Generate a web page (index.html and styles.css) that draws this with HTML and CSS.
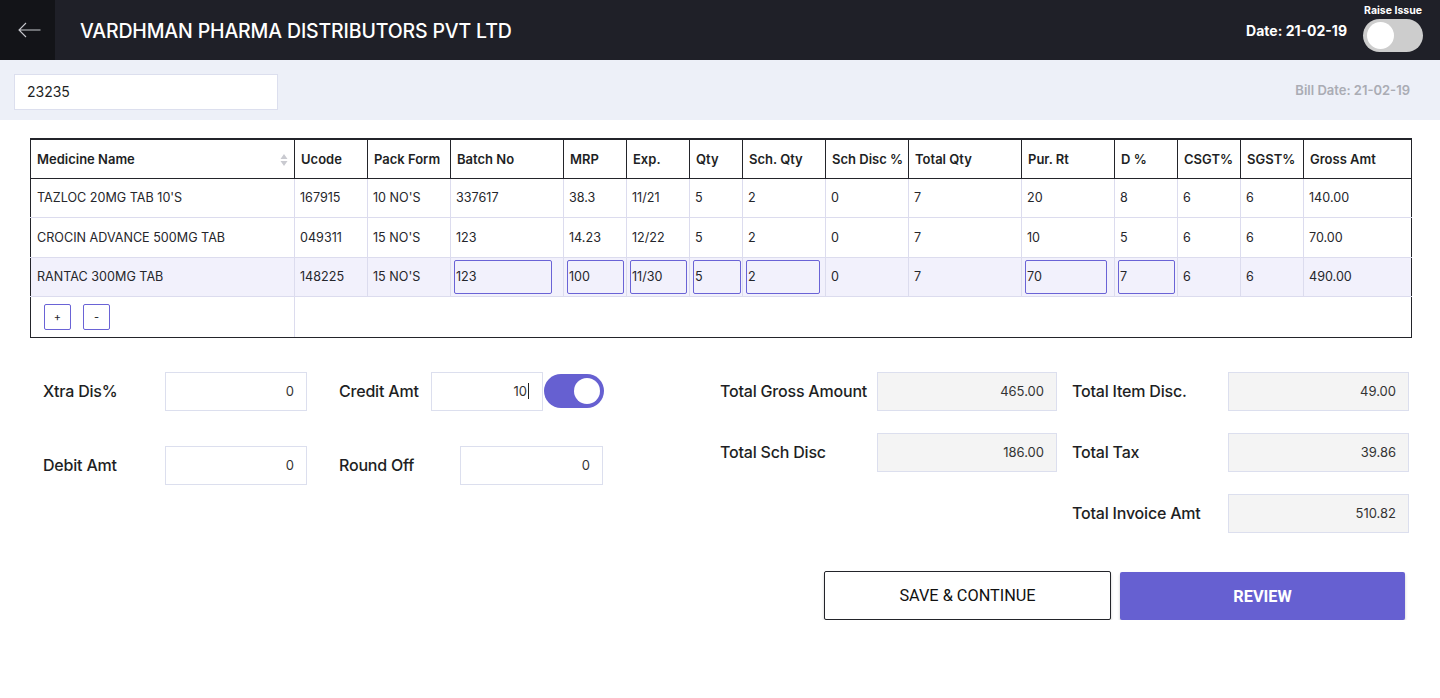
FILE: index.html
```html
<!DOCTYPE html>
<html>
<head>
<meta charset="utf-8">
<link rel="stylesheet" href="styles.css">
</head>
<body>
<header class="topbar">
  <div class="back">
    <svg width="23" height="16" viewBox="0 0 23 16"><path d="M22.5 8H1M8 1L1 8l7 7" fill="none" stroke="#c8c9ce" stroke-width="1.1"/></svg>
  </div>
  <div class="title">VARDHMAN PHARMA DISTRIBUTORS PVT LTD</div>
  <div class="top-right">
    <div class="date">Date: 21-02-19</div>
    <div class="raise">
      <div class="raise-label">Raise Issue</div>
      <div class="switch off"><span class="knob"></span></div>
    </div>
  </div>
</header>

<section class="subbar">
  <div class="bill-input">23235</div>
  <div class="bill-date">Bill Date: 21-02-19</div>
</section>

<div class="table-wrap">
<table class="grid">
  <colgroup>
    <col class="c264"><col class="c73"><col class="c83"><col class="c113">
    <col class="c63"><col class="c63"><col class="c53"><col class="c83">
    <col class="c83"><col class="c113"><col class="c93"><col class="c63">
    <col class="c63"><col class="c63"><col>
  </colgroup>
  <thead>
    <tr>
      <th class="sortable">Medicine Name<span class="sort"><svg width="8" height="14" viewBox="0 0 8 14"><path d="M4 1L7.5 6H0.5z M4 13L7.5 8H0.5z" fill="#c9cad0"/></svg></span></th>
      <th>Ucode</th><th>Pack Form</th><th>Batch No</th><th>MRP</th><th>Exp.</th><th>Qty</th><th>Sch. Qty</th><th>Sch Disc %</th><th>Total Qty</th><th>Pur. Rt</th><th>D %</th><th>CSGT%</th><th>SGST%</th><th>Gross Amt</th>
    </tr>
  </thead>
  <tbody>
    <tr>
      <td>TAZLOC 20MG TAB 10'S</td><td>167915</td><td>10 NO'S</td><td>337617</td><td>38.3</td><td>11/21</td><td>5</td><td>2</td><td>0</td><td>7</td><td>20</td><td>8</td><td>6</td><td>6</td><td>140.00</td>
    </tr>
    <tr>
      <td>CROCIN ADVANCE 500MG TAB</td><td>049311</td><td>15 NO'S</td><td>123</td><td>14.23</td><td>12/22</td><td>5</td><td>2</td><td>0</td><td>7</td><td>10</td><td>5</td><td>6</td><td>6</td><td>70.00</td>
    </tr>
    <tr class="editing">
      <td>RANTAC 300MG TAB</td><td>148225</td><td>15 NO'S</td>
      <td class="ed"><div class="cell-input i97">123</div></td>
      <td class="ed"><div class="cell-input i56">100</div></td>
      <td class="ed"><div class="cell-input i56">11/30</div></td>
      <td class="ed"><div class="cell-input i47">5</div></td>
      <td class="ed"><div class="cell-input i73">2</div></td>
      <td>0</td><td>7</td>
      <td class="ed"><div class="cell-input i81">70</div></td>
      <td class="ed"><div class="cell-input i56">7</div></td>
      <td>6</td><td>6</td><td>490.00</td>
    </tr>
    <tr class="foot">
      <td class="btns"><span class="sq">+</span><span class="sq">-</span></td>
      <td colspan="14"></td>
    </tr>
  </tbody>
</table>
</div>

<section class="bottom">
  <div class="left-form">
    <div class="frow">
      <label class="lbl w122">Xtra Dis%</label>
      <div class="box w142">0</div>
      <label class="lbl w92 ml32">Credit Amt</label>
      <div class="box w112">10<span class="caret"></span></div>
      <div class="switch on small"><span class="knob"></span></div>
    </div>
    <div class="frow">
      <label class="lbl w122">Debit Amt</label>
      <div class="box w142">0</div>
      <label class="lbl w121 ml32">Round Off</label>
      <div class="box w143">0</div>
    </div>
  </div>
  <div class="right-form">
    <div class="trow">
      <label class="tl w157">Total Gross Amount</label><div class="tbox w180">465.00</div>
      <label class="tl w156 ml15">Total Item Disc.</label><div class="tbox w181">49.00</div>
    </div>
    <div class="trow">
      <label class="tl w157">Total Sch Disc</label><div class="tbox w180">186.00</div>
      <label class="tl w156 ml15">Total Tax</label><div class="tbox w181">39.86</div>
    </div>
    <div class="trow end">
      <label class="tl w156">Total Invoice Amt</label><div class="tbox w181">510.82</div>
    </div>
  </div>
</section>

<section class="actions">
  <button class="btn save">SAVE &amp; CONTINUE</button>
  <button class="btn review">REVIEW</button>
</section>
</body>
</html>
```

FILE: styles.css
```css
* { box-sizing: border-box; }
body {
  margin: 0;
  background: #fff;
  font-family: Inter, "Noto Sans", "Liberation Sans", sans-serif;
  color: #1e1f24;
}

.topbar {
  height: 60px;
  background: #1f2028;
  display: flex;
  align-items: center;
}
.back {
  width: 55px;
  height: 60px;
  background: #131418;
  display: flex;
  align-items: center;
  justify-content: center;
  padding-left: 3px;
}
.title {
  margin-left: 25px;
  color: #fff;
  font-size: 19.5px;
  font-weight: 500;
  letter-spacing: -0.15px;
  padding-top: 1px;
}
.top-right {
  margin-left: auto;
  display: flex;
  align-items: center;
  padding-right: 17px;
  height: 60px;
}
.date {
  color: #fff;
  font-weight: 700;
  font-size: 14px;
  margin-right: 16px;
  padding-top: 1px;
}
.raise {
  display: flex;
  flex-direction: column;
  align-items: center;
  padding-top: 2px;
  align-self: flex-start;
}
.raise-label {
  color: #fff;
  font-size: 10.5px;
  font-weight: 700;
  line-height: 12px;
  margin-top: 3px;
  margin-bottom: 2px;
}
.switch {
  width: 60px;
  height: 33px;
  border-radius: 17px;
  position: relative;
}
.switch.off { background: #cdcdcd; }
.switch.on { background: #6660d1; }
.switch .knob {
  position: absolute;
  top: 3px;
  width: 27px;
  height: 27px;
  border-radius: 50%;
  background: #fff;
}
.switch.off .knob { left: 4px; }
.switch.on .knob { right: 4px; }
.switch.small { height: 34px; margin-top: -1px; }
.switch.small .knob { top: 4px; width: 26px; height: 26px; }

.subbar {
  height: 60px;
  background: #edf0f8;
  display: flex;
  align-items: flex-start;
  padding: 14px 30px 0 14px;
}
.bill-input {
  width: 264px;
  height: 36px;
  background: #fff;
  border: 1px solid #dcdfee;
  font-size: 14px;
  line-height: 34px;
  padding-left: 12px;
  color: #1e1f24;
}
.bill-date {
  margin-left: auto;
  color: #aaacb4;
  font-size: 13px;
  font-weight: 600;
  margin-top: 8px;
}

.table-wrap {
  margin: 18px 28px 0 30px;
}
.grid {
  width: 1382px;
  border-collapse: collapse;
  table-layout: fixed;
  border: 1px solid #23242a;
  border-top-width: 2px;
  font-size: 13px;
}
.c264 { width: 264px; }
.c73 { width: 73px; }
.c83 { width: 83px; }
.c113 { width: 113px; }
.c63 { width: 63px; }
.c53 { width: 53px; }
.c93 { width: 93px; }
.grid th {
  height: 39px;
  text-align: left;
  font-weight: 600;
  padding: 0 6px;
  border: 1px solid #23242a;
  white-space: nowrap;
  color: #1e1f24;
}
.grid th.sortable { position: relative; }
.sort {
  position: absolute;
  right: 6px;
  top: 13px;
}
.grid td {
  height: 39.5px;
  padding: 0 5px;
  border: 1px solid #dcdcee;
  white-space: nowrap;
  color: #25262b;
  font-size: 12.6px;
}
.grid td:first-child { border-left-color: #23242a; padding-left: 6px; }
.grid td:last-child { border-right-color: #23242a; }
.grid tr.editing td { background: #f2f1fc; }
.grid td.ed { padding: 0 3px; }
.cell-input {
  height: 34px;
  border: 1px solid #6a63d6;
  border-radius: 2px;
  line-height: 32px;
  padding-left: 1px;
  background: #f2f1fc;
}
.i97 { width: 98px; }
.i56 { width: 57px; }
.i47 { width: 48px; }
.i73 { width: 74px; }
.i81 { width: 82px; }
.grid tr.foot td {
  height: 41px;
  border-bottom: 1px solid #23242a;
  background: #fff;
}
.grid tr.foot td:last-child { border-left-color: #dcdcee; }
.btns { padding-left: 13px !important; }
.sq {
  display: inline-block;
  width: 27px;
  height: 26px;
  border: 1px solid #6a63d6;
  border-radius: 2px;
  text-align: center;
  line-height: 24px;
  font-size: 11px;
  margin-right: 12px;
  vertical-align: middle;
}

.bottom {
  display: flex;
  margin-top: 34px;
  padding-left: 43px;
}
.left-form {
  width: 561px;
}
.frow {
  display: flex;
  align-items: center;
  height: 39px;
  margin-bottom: 35px;
}
.lbl {
  font-size: 16px;
  font-weight: 500;
  letter-spacing: -0.2px;
  color: #1e1f24;
  padding-bottom: 2px;
}
.w122 { width: 122px; }
.w92 { width: 92px; }
.w121 { width: 121px; }
.ml32 { margin-left: 32px; }
.ml15 { margin-left: 15px; }
.box {
  height: 39px;
  border: 1px solid #dcdfee;
  background: #fff;
  text-align: right;
  padding-right: 12px;
  font-size: 13px;
  line-height: 37px;
  color: #333;
}
.w142 { width: 142px; }
.w112 { width: 112px; padding-right: 13px; margin-right: 1px; }
.w143 { width: 143px; }
.caret {
  display: inline-block;
  width: 1px;
  height: 16px;
  background: #222;
  vertical-align: middle;
  margin-left: 1px;
  margin-top: -3px;
}

.right-form {
  margin-left: 116px;
  width: 689px;
}
.trow {
  display: flex;
  align-items: center;
  height: 39px;
  margin-bottom: 22px;
}
.trow.end { justify-content: flex-end; }
.tl {
  font-size: 16px;
  font-weight: 500;
  letter-spacing: -0.2px;
  color: #1e1f24;
  padding-bottom: 2px;
}
.w157 { width: 157px; }
.w156 { width: 156px; }
.tbox {
  height: 39px;
  background: #f4f4f4;
  border: 1px solid #dcdfee;
  text-align: right;
  padding-right: 12px;
  font-size: 13px;
  line-height: 37px;
  color: #333;
}
.w180 { width: 180px; }
.w181 { width: 181px; }

.actions {
  display: flex;
  justify-content: flex-end;
  padding-right: 35px;
  margin-top: 16px;
}
.btn {
  font-family: Roboto, "Liberation Sans", sans-serif;
  font-size: 16.3px;
  height: 49px;
  cursor: pointer;
  border-radius: 2px;
  box-shadow: 0 2px 3px rgba(0,0,0,0.22);
}
.btn.save {
  width: 287px;
  background: #fff;
  border: 1px solid #23242a;
  color: #111;
  margin-right: 9px;
}
.btn.review {
  width: 285px;
  height: 48px;
  margin-top: 1px;
  background: #6660d1;
  border: none;
  color: #fff;
  font-weight: 700;
}
```
